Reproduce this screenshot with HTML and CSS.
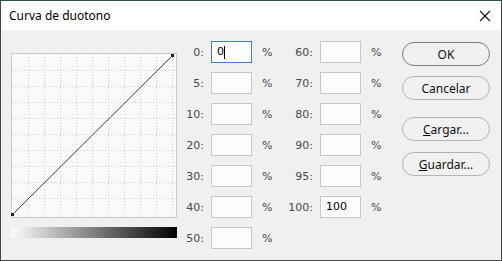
FILE: index.html
```html
<!DOCTYPE html>
<html lang="es">
<head>
    <meta charset="UTF-8">
    <title>Curva de duotono</title>
    <link rel="stylesheet" href="styles.css">
</head>
<body>
    <div class="window">
        <div class="titlebar">
            <span class="title">Curva de duotono</span>
            <svg class="close" width="12" height="12" viewBox="0 0 12 12">
                <path d="M1 1 L11 11 M11 1 L1 11" stroke="#111" stroke-width="1.1" fill="none"/>
            </svg>
        </div>

        <div class="content">
            <div class="curve">
                <svg class="graph" width="166" height="165" viewBox="0 0 166 165">
                    <rect x="0.5" y="0.5" width="165" height="164" fill="#fafafa" stroke="#c9c9c9"/>
                    <g stroke="#cfcfcf" stroke-dasharray="1 2" fill="none">
                        <path d="M17.5 1 V164 M33.5 1 V164 M49.5 1 V164 M65.5 1 V164 M81.5 1 V164 M97.5 1 V164 M113.5 1 V164 M129.5 1 V164 M145.5 1 V164 M161.5 1 V164"/>
                        <path d="M1 17.5 H165 M1 33.5 H165 M1 49.5 H165 M1 65.5 H165 M1 81.5 H165 M1 97.5 H165 M1 113.5 H165 M1 129.5 H165 M1 145.5 H165"/>
                    </g>
                    <path d="M1.5 161.5 L161.5 2.5" stroke="#3e3e3e" stroke-width="1" fill="none"/>
                    <rect x="0" y="160" width="3" height="3" fill="#222"/>
                    <rect x="160" y="1" width="3" height="3" fill="#222"/>
                </svg>
                <div class="ramp"></div>
            </div>

            <div class="fields">
                <div class="field"><span class="lbl">0:</span><div class="box focus">0<span class="caret"></span></div><span class="pct">%</span></div>
                <div class="field"><span class="lbl">5:</span><div class="box"></div><span class="pct">%</span></div>
                <div class="field"><span class="lbl">10:</span><div class="box"></div><span class="pct">%</span></div>
                <div class="field"><span class="lbl">20:</span><div class="box"></div><span class="pct">%</span></div>
                <div class="field"><span class="lbl">30:</span><div class="box"></div><span class="pct">%</span></div>
                <div class="field"><span class="lbl">40:</span><div class="box"></div><span class="pct">%</span></div>
                <div class="field"><span class="lbl">50:</span><div class="box"></div><span class="pct">%</span></div>
                <div class="field"><span class="lbl">60:</span><div class="box"></div><span class="pct">%</span></div>
                <div class="field"><span class="lbl">70:</span><div class="box"></div><span class="pct">%</span></div>
                <div class="field"><span class="lbl">80:</span><div class="box"></div><span class="pct">%</span></div>
                <div class="field"><span class="lbl">90:</span><div class="box"></div><span class="pct">%</span></div>
                <div class="field"><span class="lbl">95:</span><div class="box"></div><span class="pct">%</span></div>
                <div class="field"><span class="lbl">100:</span><div class="box">100</div><span class="pct">%</span></div>
            </div>

            <div class="buttons">
                <button class="btn default">OK</button>
                <button class="btn">Cancelar</button>
                <button class="btn spaced"><u>C</u>argar...</button>
                <button class="btn last"><u>G</u>uardar...</button>
            </div>
        </div>
    </div>
</body>
</html>
```

FILE: styles.css
```css
body {
    margin: 0;
    background: #f0f0f0;
}
.window {
    box-sizing: border-box;
    width: 502px;
    height: 261px;
    border: 1px solid #454545;
    border-top-color: #2f4f58;
    background-color: #f0f0f0;
}
.titlebar {
    height: 29px;
    background-color: #fff;
    display: flex;
    align-items: center;
    justify-content: space-between;
    padding: 0 9px 0 8px;
}
.title {
    font-family: "Noto Sans", sans-serif;
    font-size: 12px;
    color: #000;
}
.close {
    margin-right: 1px;
}
.content {
    display: flex;
    padding: 11px 0 0 10px;
}
.curve {
    display: flex;
    flex-direction: column;
    width: 166px;
    padding-top: 12px;
}
.graph {
    display: block;
}
.ramp {
    height: 11px;
    margin-top: 9px;
    background: linear-gradient(to right, #fdfdfd, #000);
}
.fields {
    display: grid;
    grid-template-rows: repeat(7, 22px);
    grid-auto-flow: column;
    row-gap: 9px;
    column-gap: 12px;
    font-family: "DejaVu Sans", sans-serif;
    font-size: 11px;
    color: #4a4a4a;
}
.field {
    display: flex;
    align-items: center;
}
.lbl {
    width: 27px;
    margin-right: 7px;
    text-align: right;
}
.box {
    box-sizing: border-box;
    width: 41px;
    height: 22px;
    border: 1px solid #c6c6c6;
    background-color: #fcfcfc;
    padding-left: 5px;
    line-height: 20px;
    color: #000;
    display: flex;
    align-items: center;
}
.box.focus {
    border-color: #3a7fdb;
}
.caret {
    display: inline-block;
    width: 1px;
    height: 13px;
    background-color: #000;
}
.pct {
    width: 12px;
    margin-left: 10px;
}
.buttons {
    display: flex;
    flex-direction: column;
    gap: 10px;
    margin-left: 19px;
    padding-top: 1px;
}
.btn {
    box-sizing: border-box;
    width: 88px;
    height: 24px;
    border: 1px solid #b3b3b3;
    border-radius: 12px;
    background-color: #f1f1f1;
    font-family: "Noto Sans", sans-serif;
    font-size: 12px;
    color: #111;
    padding: 0;
}
.btn.default {
    border-color: #7d7d7d;
}
.btn.spaced {
    margin-top: 7px;
}
.btn.last {
    margin-top: 1px;
}
.btn u {
    text-decoration-thickness: 1px;
}
```
